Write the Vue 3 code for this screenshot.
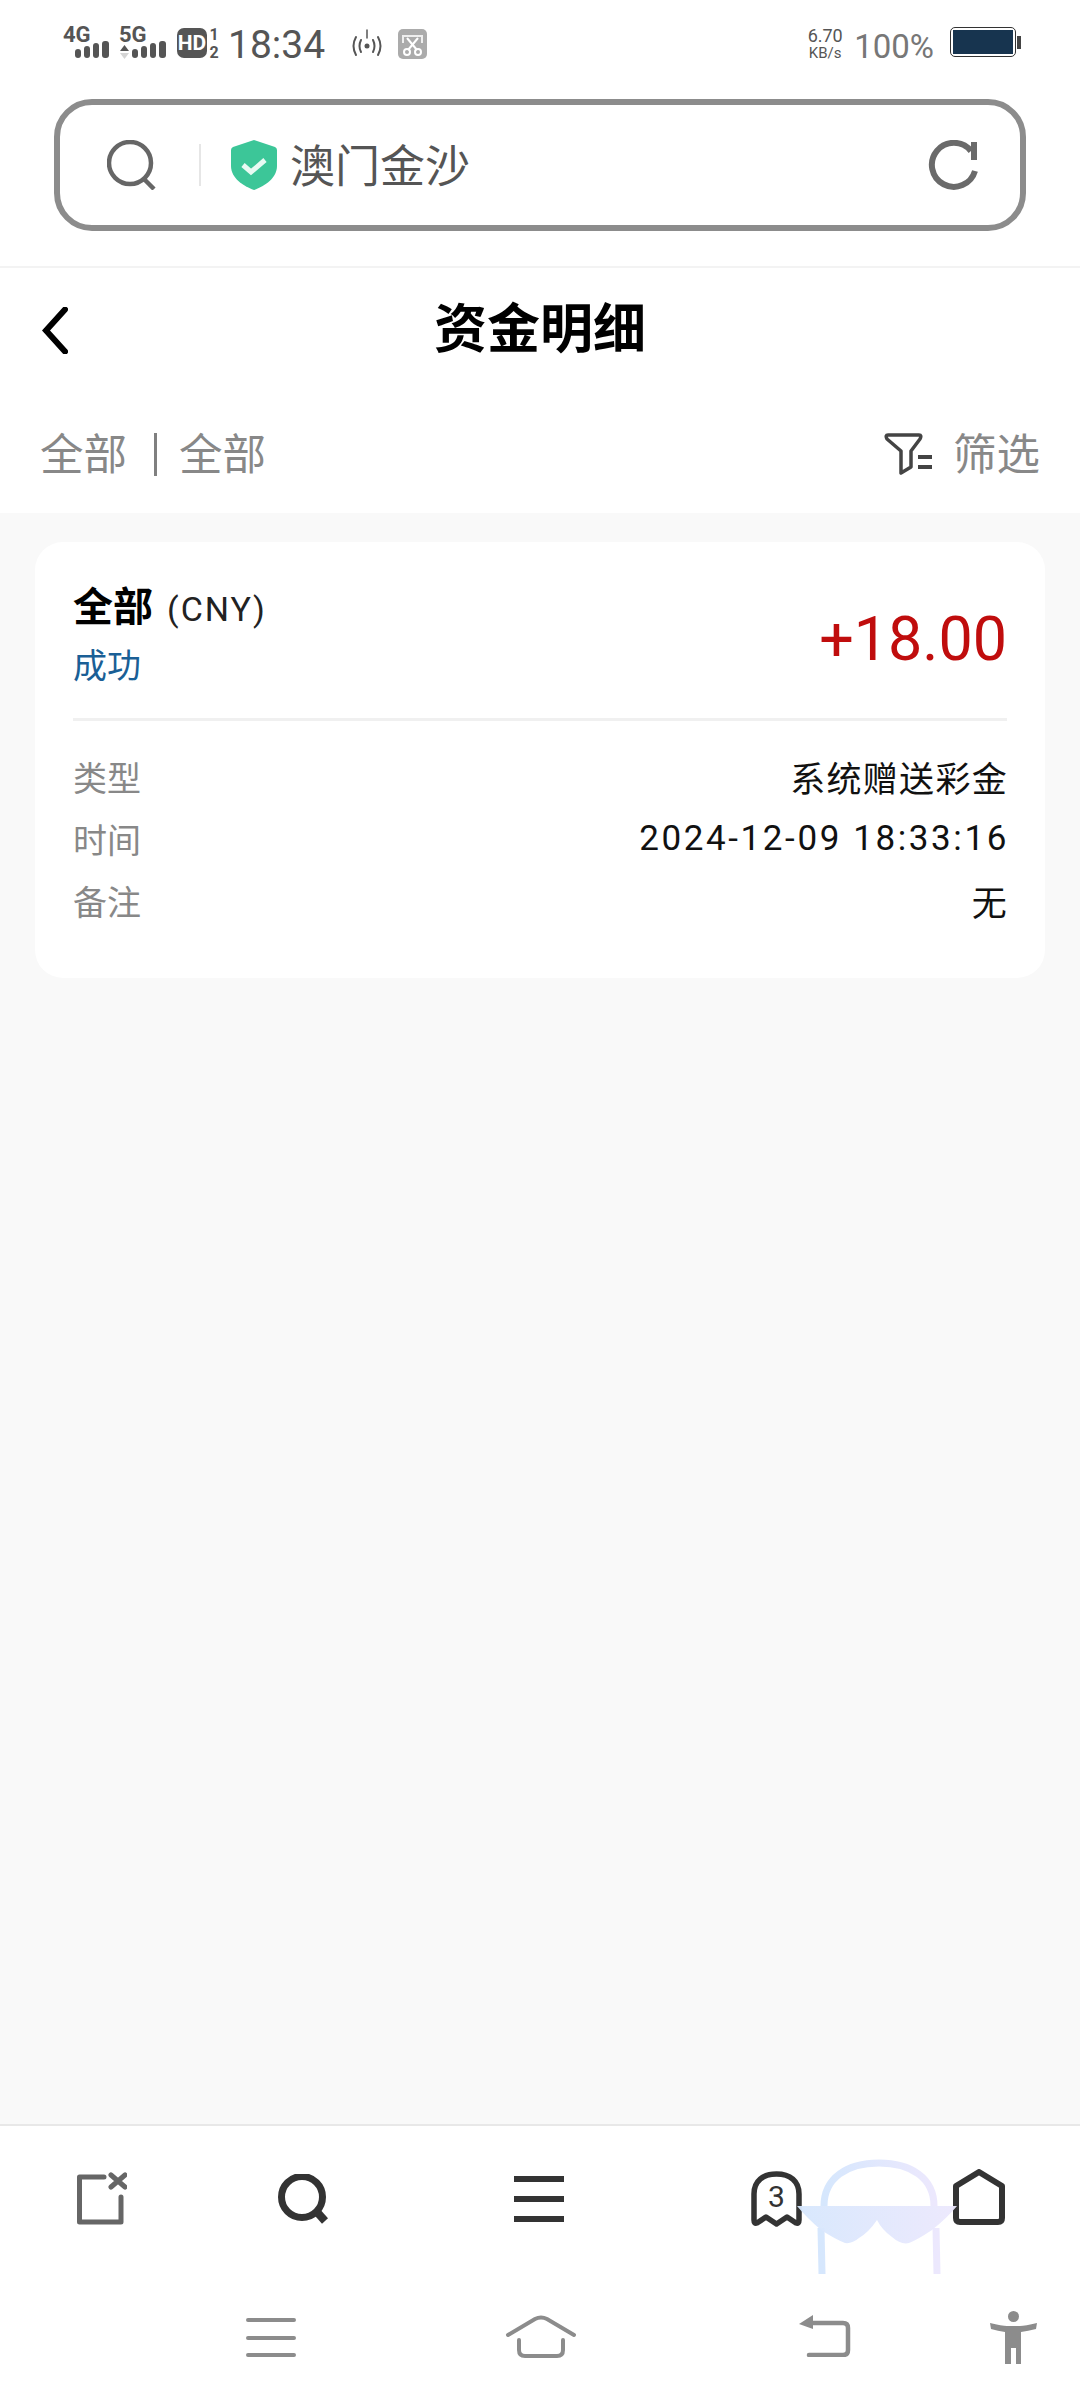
<script setup>
// rows of the record card
const rows = [
  { label: '类型', value: '系统赠送彩金' },
  { label: '时间', value: '2024-12-09 18:33:16', wide: true },
  { label: '备注', value: '无' },
];
</script>

<template>
  <div class="page">
    <!-- status bar -->
    <div class="status">
      <svg class="sig" width="157" height="44" viewBox="0 -10 157 44">
        <text x="0" y="15" class="net">4G</text>
        <rect x="12" y="22" width="6" height="9" rx="3" fill="#555" />
        <rect x="21" y="19" width="6" height="12" rx="3" fill="#555" />
        <rect x="30" y="16" width="6" height="15" rx="3" fill="#555" />
        <rect x="39" y="14" width="7" height="17" rx="3" fill="#555" />
        <text x="56" y="15" class="net">5G</text>
        <path d="M57 24 L61.500 18 L66 24 Z" fill="#555" />
        <path d="M57 26 L61.500 32 L66 26 Z" fill="#d5d5d5" />
        <rect x="69" y="22" width="6" height="9" rx="3" fill="#555" />
        <rect x="78" y="19" width="6" height="12" rx="3" fill="#555" />
        <rect x="87" y="16" width="6" height="15" rx="3" fill="#555" />
        <rect x="96" y="14" width="7" height="17" rx="3" fill="#555" />
        <rect x="114" y="1" width="30" height="30" rx="7" fill="#555" />
        <text x="129" y="23" text-anchor="middle" class="hd">HD</text>
        <text x="151" y="13" text-anchor="middle" class="sim">1</text>
        <text x="151" y="31" text-anchor="middle" class="sim">2</text>
      </svg>
      <span class="time">18:34</span>
      <svg class="spot" width="30" height="28" viewBox="0 0 30 28" fill="none" stroke="#555" stroke-width="2" stroke-linecap="round">
        <path d="M4 8 Q-1 17 4 26" />
        <path d="M9 11 Q6 17 9 23" />
        <path d="M26 8 Q31 17 26 26" />
        <path d="M21 11 Q24 17 21 23" />
        <circle cx="15" cy="17" r="2.500" fill="#555" stroke="none" />
        <path d="M15 1 V9" stroke-width="1.500" />
      </svg>
      <svg class="cut" width="29" height="30" viewBox="0 0 29 30" fill="none">
        <rect width="29" height="30" rx="5" fill="#ababab" />
        <path d="M5 14 V7 H24 V14" stroke="#eee" stroke-width="2" />
        <path d="M9 9 L19 21 M20 9 L10 21" stroke="#fff" stroke-width="2" />
        <circle cx="9" cy="23" r="3" stroke="#fff" stroke-width="2" />
        <circle cx="20" cy="23" r="3" stroke="#fff" stroke-width="2" />
      </svg>
      <div class="speed">
        <span class="speed-num">6.70</span>
        <span class="speed-unit">KB/s</span>
      </div>
      <span class="pct">100%</span>
      <div class="battery">
        <div class="battery-body"><div class="battery-fill"></div></div>
        <div class="battery-nub"></div>
      </div>
    </div>

    <!-- address bar -->
    <div class="address-wrap">
      <div class="address">
        <svg class="addr-search" width="50" height="50" viewBox="0 0 50 50" fill="none" stroke="#666">
          <circle cx="23" cy="23" r="21" stroke-width="4.500" />
          <path d="M37 39 L47 49" stroke-width="4.500" />
        </svg>
        <div class="addr-line"></div>
        <svg class="shield" width="46" height="50" viewBox="0 0 46 50">
          <path d="M23 0 L44 7 Q46 8 46 10 V26 C46 38 34 46 23 50 C12 46 0 38 0 26 V10 Q0 8 2 7 Z" fill="#3cc698" />
          <path d="M12 25 L20 32 L34 20" fill="none" stroke="#e8faf3" stroke-width="5" />
        </svg>
        <span class="site">澳门金沙</span>
        <svg class="reload" width="50" height="50" viewBox="0 0 50 50" fill="none">
          <path d="M43 11 A22 22 0 1 0 47 31" stroke="#6a6a6a" stroke-width="6" />
          <rect x="43" y="2" width="6" height="18" fill="#6a6a6a" />
        </svg>
      </div>
    </div>

    <!-- title -->
    <div class="header">
      <svg class="back" width="26" height="47" viewBox="0 0 26 47" fill="none">
        <path d="M23 2.500 L4 23.500 L23 44.500" stroke="#000" stroke-width="6" stroke-linecap="round" />
      </svg>
      <h1 class="title">资金明细</h1>
    </div>

    <!-- filter row -->
    <div class="filter">
      <span>全部</span>
      <i class="filter-sep"></i>
      <span>全部</span>
      <svg class="filter-icon" width="49" height="42" viewBox="0 0 49 42" fill="none" stroke="#444">
        <path d="M4 2 H35 Q38 2 36 6 L27 18 V34 L17 40 V18 L3 6 Q1 2 4 2 Z" stroke-width="3.500" stroke-linejoin="round" />
        <path d="M34 24 H48 M34 34 H48" stroke-width="4" />
      </svg>
      <span class="filter-txt">筛选</span>
    </div>

    <!-- list -->
    <div class="main">
      <div class="card">
        <div class="card-top">
          <div>
            <div class="card-name"><b>全部</b><span class="cny">(CNY)</span></div>
            <div class="card-state">成功</div>
          </div>
          <div class="amount">+18.00</div>
        </div>
        <div class="card-line"></div>
        <div class="row" v-for="row in rows" :key="row.label">
          <span class="row-label">{{ row.label }}</span>
          <span class="row-value" :class="{ wide: row.wide }">{{ row.value }}</span>
        </div>
      </div>
    </div>

    <!-- browser toolbar + system nav -->
    <div class="bottom">
      <div class="tools">
        <svg class="t1" width="50" height="53" viewBox="0 0 50 53" fill="none" stroke="#666" stroke-linecap="round">
          <path d="M27 5 H2.500 V50 H44 V25" stroke-width="5" stroke-linejoin="round" />
          <path d="M34 3 L48 15 M48 3 L34 15" stroke-width="5" />
        </svg>
        <svg class="t2" width="50" height="50" viewBox="0 0 50 50" fill="none" stroke="#333">
          <circle cx="24" cy="23" r="20.500" stroke-width="7" />
          <path d="M39 38 L47 47" stroke-width="8" />
        </svg>
        <svg class="t3" width="50" height="46" viewBox="0 0 50 46" fill="#333">
          <rect width="50" height="6" />
          <rect y="20" width="50" height="6" />
          <rect y="40" width="50" height="6" />
        </svg>
        <svg class="t4" width="51" height="56" viewBox="0 0 51 56" fill="none">
          <path d="M3 23 C3 10 12 3 25.500 3 S48 10 48 23 V49 Q48 53 45 52 L36 46 L25.500 53 L15 46 L6 52 Q3 53 3 49 Z" stroke="#333" stroke-width="5.500" stroke-linejoin="round" />
          <text x="25.500" y="36" text-anchor="middle" class="tab-num">3</text>
        </svg>
        <svg class="t5" width="52" height="56" viewBox="0 0 52 56" fill="none">
          <path d="M26 3 L49 17 V49 Q49 53 45 53 H7 Q3 53 3 49 V17 Z" stroke="#333" stroke-width="6" stroke-linejoin="round" />
        </svg>
      </div>

      <div class="nav">
        <svg class="n1" width="50" height="40" viewBox="0 0 50 40" fill="none" stroke="#8c8c8c" stroke-width="4" stroke-linecap="round">
          <path d="M2 2 H48 M2 20 H48 M2 37 H48" />
        </svg>
        <svg class="n2" width="72" height="44" viewBox="0 0 72 44" fill="none" stroke="#8c8c8c" stroke-width="4" stroke-linecap="round">
          <path d="M3 20 L30 4 Q36 1 42 4 L69 20" />
          <path d="M14 25 V35 Q14 41 20 41 H52 Q58 41 58 35 V25" />
        </svg>
        <svg class="n3" width="52" height="42" viewBox="0 0 52 42" fill="none">
          <path d="M0 9 L14 0 V14 Z" fill="#8c8c8c" />
          <path d="M12 8 H44 Q49 8 49 13 V35 Q49 40 44 40 H10" stroke="#8c8c8c" stroke-width="4.500" stroke-linecap="round" />
        </svg>
        <svg class="n4" width="47" height="53" viewBox="0 0 47 53" fill="#8c8c8c">
          <circle cx="23.500" cy="5.500" r="5.500" />
          <path d="M0 12 Q12 15 17 15 H30 Q35 15 47 12 L46 18 Q38 20 31 21 V53 H26 V37 H21 V53 H15 V21 Q8 20 1 18 Z" />
        </svg>
      </div>

      <!-- floating glasses watermark -->
      <svg class="glasses" width="160" height="118" viewBox="0 0 160 118" fill="none">
        <defs>
          <linearGradient id="gl" x1="0" y1="0" x2="1" y2="0">
            <stop offset="0" stop-color="#d6e7fd" />
            <stop offset="1" stop-color="#ece8fd" />
          </linearGradient>
        </defs>
        <path d="M27 48 C27 20 50 5 82 5 S137 20 137 48" stroke="url(#gl)" stroke-width="7" />
        <path d="M24 70 L25 116 M139 70 L140 116" stroke="url(#gl)" stroke-width="7" />
        <path d="M0 48 H160 Q150 60 135 72 Q120 82 112 85 Q104 87 95 79 Q85 72 80 62 Q72 74 62 80 Q55 86 48 85 Q38 81 24 72 Q10 60 0 48 Z" fill="url(#gl)" fill-opacity="0.95" />
      </svg>
    </div>
  </div>
</template>

<style>
  body {
    margin: 0;
    background: #fff;
  }
</style>

<style scoped>
  .page {
    width: 1080px;
    height: 2400px;
    display: flex;
    flex-direction: column;
    background: #fff;
    font-family: Roboto, "Noto Sans CJK SC", sans-serif;
    overflow: hidden;
  }

  /* status bar */
  .status {
    height: 99px;
    box-sizing: border-box;
    padding: 27px 59px 0 63px;
    display: flex;
    align-items: flex-start;
    color: #555;
  }
  .sig {
    margin-top: -10px;
  }
  .net {
    font: bold 22px Roboto, sans-serif;
    fill: #555;
  }
  .hd {
    font: bold 21px Roboto, sans-serif;
    fill: #fff;
  }
  .sim {
    font: bold 16px Roboto, sans-serif;
    fill: #555;
  }
  .time {
    margin-left: 8px;
    font-size: 39px;
    line-height: 38px;
    margin-top: -1px;
    color: #555;
  }
  .spot {
    margin-left: 27px;
    margin-top: 2px;
  }
  .cut {
    margin-left: 16px;
    margin-top: 2px;
  }
  .speed {
    margin-left: auto;
    width: 36px;
    display: flex;
    flex-direction: column;
    align-items: center;
    color: #555;
  }
  .speed-num {
    font-size: 18px;
    line-height: 18px;
  }
  .speed-unit {
    font-size: 15px;
    line-height: 16px;
  }
  .pct {
    margin-left: 11px;
    font-size: 33px;
    line-height: 34px;
    color: #777;
    margin-top: 3px;
  }
  .battery {
    margin-left: 16px;
    display: flex;
    align-items: center;
  }
  .battery-body {
    width: 66px;
    height: 30px;
    box-sizing: border-box;
    border: 1.500px solid #333;
    border-radius: 5px;
    padding: 2px;
  }
  .battery-fill {
    height: 100%;
    background: #17344f;
  }
  .battery-nub {
    width: 4px;
    height: 13px;
    background: #444;
    margin-left: 1px;
  }

  /* address bar */
  .address-wrap {
    padding: 0 54px 35px;
    border-bottom: 2px solid #f3f3f3;
  }
  .address {
    height: 132px;
    box-sizing: border-box;
    border: 6px solid #8c8c8c;
    border-radius: 38px;
    display: flex;
    align-items: center;
    padding: 0 42px 0 47px;
  }
  .addr-search {
    flex: none;
  }
  .addr-line {
    width: 2px;
    height: 42px;
    background: #e6e6e6;
    margin-left: 42px;
  }
  .shield {
    margin-left: 30px;
  }
  .site {
    margin-left: 13px;
    margin-bottom: 3px;
    font-size: 45px;
    color: #555;
  }
  .reload {
    margin-left: auto;
  }

  /* title */
  .header {
    height: 120px;
    position: relative;
    display: flex;
    align-items: center;
    justify-content: center;
  }
  .back {
    position: absolute;
    left: 42px;
    top: 39px;
  }
  .title {
    margin: 0 0 6px;
    font-size: 53px;
    font-weight: 700;
    color: #000;
  }

  /* filter row */
  .filter {
    height: 125px;
    box-sizing: border-box;
    padding: 1px 40px 0 40px;
    display: flex;
    align-items: center;
    font-size: 43.500px;
    color: #888;
  }
  .filter-sep {
    width: 3px;
    height: 43px;
    background: #808080;
    margin: 6px 22px 0 27px;
  }
  .filter-icon {
    margin-left: auto;
    margin-top: 6px;
  }
  .filter-txt {
    margin-left: 20px;
  }

  /* list */
  .main {
    flex: 1;
    background: #f9f9f9;
    padding: 29px 35px;
  }
  .card {
    background: #fff;
    border-radius: 28px;
    padding: 44px 38px 47px 38px;
  }
  .card-top {
    height: 132px;
    display: flex;
    justify-content: space-between;
    align-items: flex-start;
  }
  .card-name {
    line-height: 44px;
    color: #000;
  }
  .card-name b {
    font-size: 40px;
  }
  .cny {
    margin-left: 14px;
    font-size: 34px;
    letter-spacing: 2px;
    color: #222;
  }
  .card-state {
    margin-top: 6px;
    font-size: 34px;
    line-height: 44px;
    color: #1a5f96;
  }
  .amount {
    margin-top: 18px;
    font-size: 61px;
    line-height: 70px;
    color: #c00d0d;
  }
  .card-line {
    height: 3px;
    background: #f0f0f0;
    margin-bottom: 24px;
  }
  .row {
    height: 62px;
    display: flex;
    justify-content: space-between;
    align-items: center;
    font-size: 34px;
  }
  .row-label {
    color: #888;
  }
  .row-value {
    color: #111;
    font-size: 35px;
    letter-spacing: 1.300px;
    margin-right: -1px;
  }
  .row-value.wide {
    letter-spacing: 2.600px;
    margin-right: -2px;
  }

  /* bottom */
  .bottom {
    height: 276px;
    box-sizing: border-box;
    border-top: 2px solid #e8e8e8;
    background: #fff;
    position: relative;
  }
  .tools {
    height: 185px;
    box-sizing: border-box;
    padding: 46px 0 0 77px;
    display: flex;
    align-items: flex-start;
  }
  .t2 {
    margin-left: 151px;
    margin-top: 2px;
  }
  .t3 {
    margin-left: 186px;
    margin-top: 4px;
  }
  .t4 {
    margin-left: 187px;
    margin-top: -1px;
  }
  .t5 {
    margin-left: 151px;
    margin-top: -3px;
  }
  .tab-num {
    font: 30px Roboto, sans-serif;
    fill: #333;
  }
  .nav {
    display: flex;
    align-items: flex-start;
    padding-left: 246px;
  }
  .n1 {
    margin-top: 7px;
  }
  .n2 {
    margin-left: 209px;
    margin-top: 4px;
  }
  .n3 {
    margin-left: 222px;
    margin-top: 4px;
  }
  .n4 {
    margin-left: 139px;
  }
  .glasses {
    position: absolute;
    left: 797px;
    top: 32px;
  }
</style>
